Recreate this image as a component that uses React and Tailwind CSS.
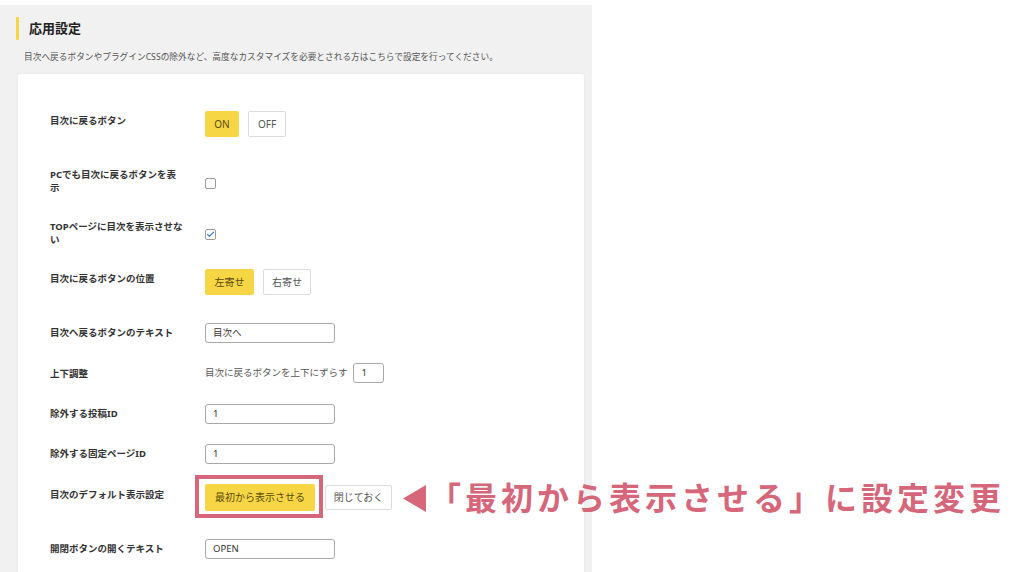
import { Check } from "lucide-react";

const yellow = "bg-[#f6d645]";

function Label({ children, pt = "pt-[3px]" }) {
  return (
    <div className={`w-[155px] shrink-0 pr-[15px] text-[9.5px] font-bold leading-[13px] text-[#333] ${pt}`}>
      {children}
    </div>
  );
}

function Toggle({ label, active, w }) {
  return (
    <button
      type="button"
      className={`flex h-[26px] items-center justify-center rounded-[2px] text-[10px] ${w} ${
        active ? `${yellow} text-[#5a4a10]` : "border border-[#dcdcdc] bg-white text-[#555]"
      }`}
    >
      {label}
    </button>
  );
}

function TextInput({ value, w = "w-[130px]" }) {
  return (
    <div
      className={`flex h-[20px] items-center rounded-[3px] border border-[#a9a9a9] bg-white px-[7px] text-[9.5px] text-[#333] ${w}`}
    >
      {value}
    </div>
  );
}

function Checkbox({ checked }) {
  return (
    <div className="flex h-[11px] w-[11px] items-center justify-center rounded-[2px] border border-[#9a9a9a] bg-white">
      {checked ? <Check className="h-[9px] w-[9px] text-[#3b7fd1]" strokeWidth={3} /> : null}
    </div>
  );
}

function Row({ h, children }) {
  return <div className={`flex items-start ${h}`}>{children}</div>;
}

export default function App() {
  return (
    <div
      className="relative h-[572px] w-[1024px] overflow-hidden bg-white"
      style={{ fontFamily: '"Noto Sans", "Noto Sans CJK JP", sans-serif' }}
    >
      <div className="pt-[5px]">
        <section className="min-h-[567px] w-[592px] bg-[#f1f1f1] pt-[12px]">
          <div className="flex h-[23px] items-center pl-[16px]">
            <span className="h-[23px] w-[3px] rounded-[1px] bg-[#f6d645]" />
            <h2 className="ml-[10px] text-[13px] font-bold text-[#222]">応用設定</h2>
          </div>
          <p className="mt-[11px] pl-[24px] text-[8.7px] leading-[12px] text-[#555]">
            目次へ戻るボタンやプラグインCSSの除外など、高度なカスタマイズを必要とされる方はこちらで設定を行ってください。
          </p>

          <div className="ml-[18px] mt-[11px] min-h-[500px] w-[566px] rounded-[2px] bg-white pl-[32px] pt-[37px] shadow-[0_0_2px_rgba(0,0,0,0.08)]">
            <Row h="h-[57px]">
              <Label>目次に戻るボタン</Label>
              <div className="flex gap-[9px]">
                <Toggle label="ON" active w="w-[34px]" />
                <Toggle label="OFF" w="w-[38px]" />
              </div>
            </Row>

            <Row h="h-[52px]">
              <Label pt="pt-0">
                PCでも目次に戻るボタンを表
                <br />示
              </Label>
              <div className="pt-[10px]">
                <Checkbox />
              </div>
            </Row>

            <Row h="h-[49px]">
              <Label pt="pt-0">
                TOPページに目次を表示させな
                <br />い
              </Label>
              <div className="pt-[9px]">
                <Checkbox checked />
              </div>
            </Row>

            <Row h="h-[54px]">
              <Label>目次に戻るボタンの位置</Label>
              <div className="flex gap-[9px]">
                <Toggle label="左寄せ" active w="w-[49px]" />
                <Toggle label="右寄せ" w="w-[48px]" />
              </div>
            </Row>

            <Row h="h-[40px]">
              <Label>目次へ戻るボタンのテキスト</Label>
              <TextInput value="目次へ" />
            </Row>

            <Row h="h-[41px]">
              <Label pt="pt-[4px]">上下調整</Label>
              <div className="flex items-center gap-[6px]">
                <span className="text-[9.5px] text-[#555]">目次に戻るボタンを上下にずらす</span>
                <TextInput value="1" w="w-[31px]" />
              </div>
            </Row>

            <Row h="h-[40px]">
              <Label>除外する投稿ID</Label>
              <TextInput value="1" />
            </Row>

            <Row h="h-[40px]">
              <Label>除外する固定ページID</Label>
              <TextInput value="1" />
            </Row>

            <Row h="h-[55px]">
              <Label pt="pt-[4px]">目次のデフォルト表示設定</Label>
              <div className="flex items-center gap-[10px]">
                <div className="relative">
                  <span className="absolute -bottom-[7px] -left-[10px] -right-[8px] -top-[9px] border-[4px] border-[#d6667a]" />
                  <button
                    type="button"
                    className={`relative flex h-[27px] w-[110px] items-center justify-center rounded-[2px] text-[10px] text-[#5a4a10] ${yellow}`}
                  >
                    最初から表示させる
                  </button>
                </div>
                <button
                  type="button"
                  className="flex h-[25px] w-[67px] items-center justify-center rounded-[2px] border border-[#dcdcdc] bg-white text-[10px] text-[#555]"
                >
                  閉じておく
                </button>
              </div>
            </Row>

            <Row h="h-[40px]">
              <Label>開閉ボタンの開くテキスト</Label>
              <TextInput value="OPEN" />
            </Row>
          </div>
        </section>
      </div>

      {/* callout pointing at the highlighted button */}
      <div className="absolute left-[403px] top-[478px] flex h-[40px] items-center">
        <svg width="23" height="27" viewBox="0 0 23 27" className="shrink-0">
          <polygon points="0,13.5 23,0 23,27" fill="#d6677a" />
        </svg>
        <span className="ml-[3px] whitespace-nowrap text-[32px] font-bold leading-none tracking-[4px] text-[#d6677a]">
          「最初から表示させる」に設定変更
        </span>
      </div>
    </div>
  );
}
